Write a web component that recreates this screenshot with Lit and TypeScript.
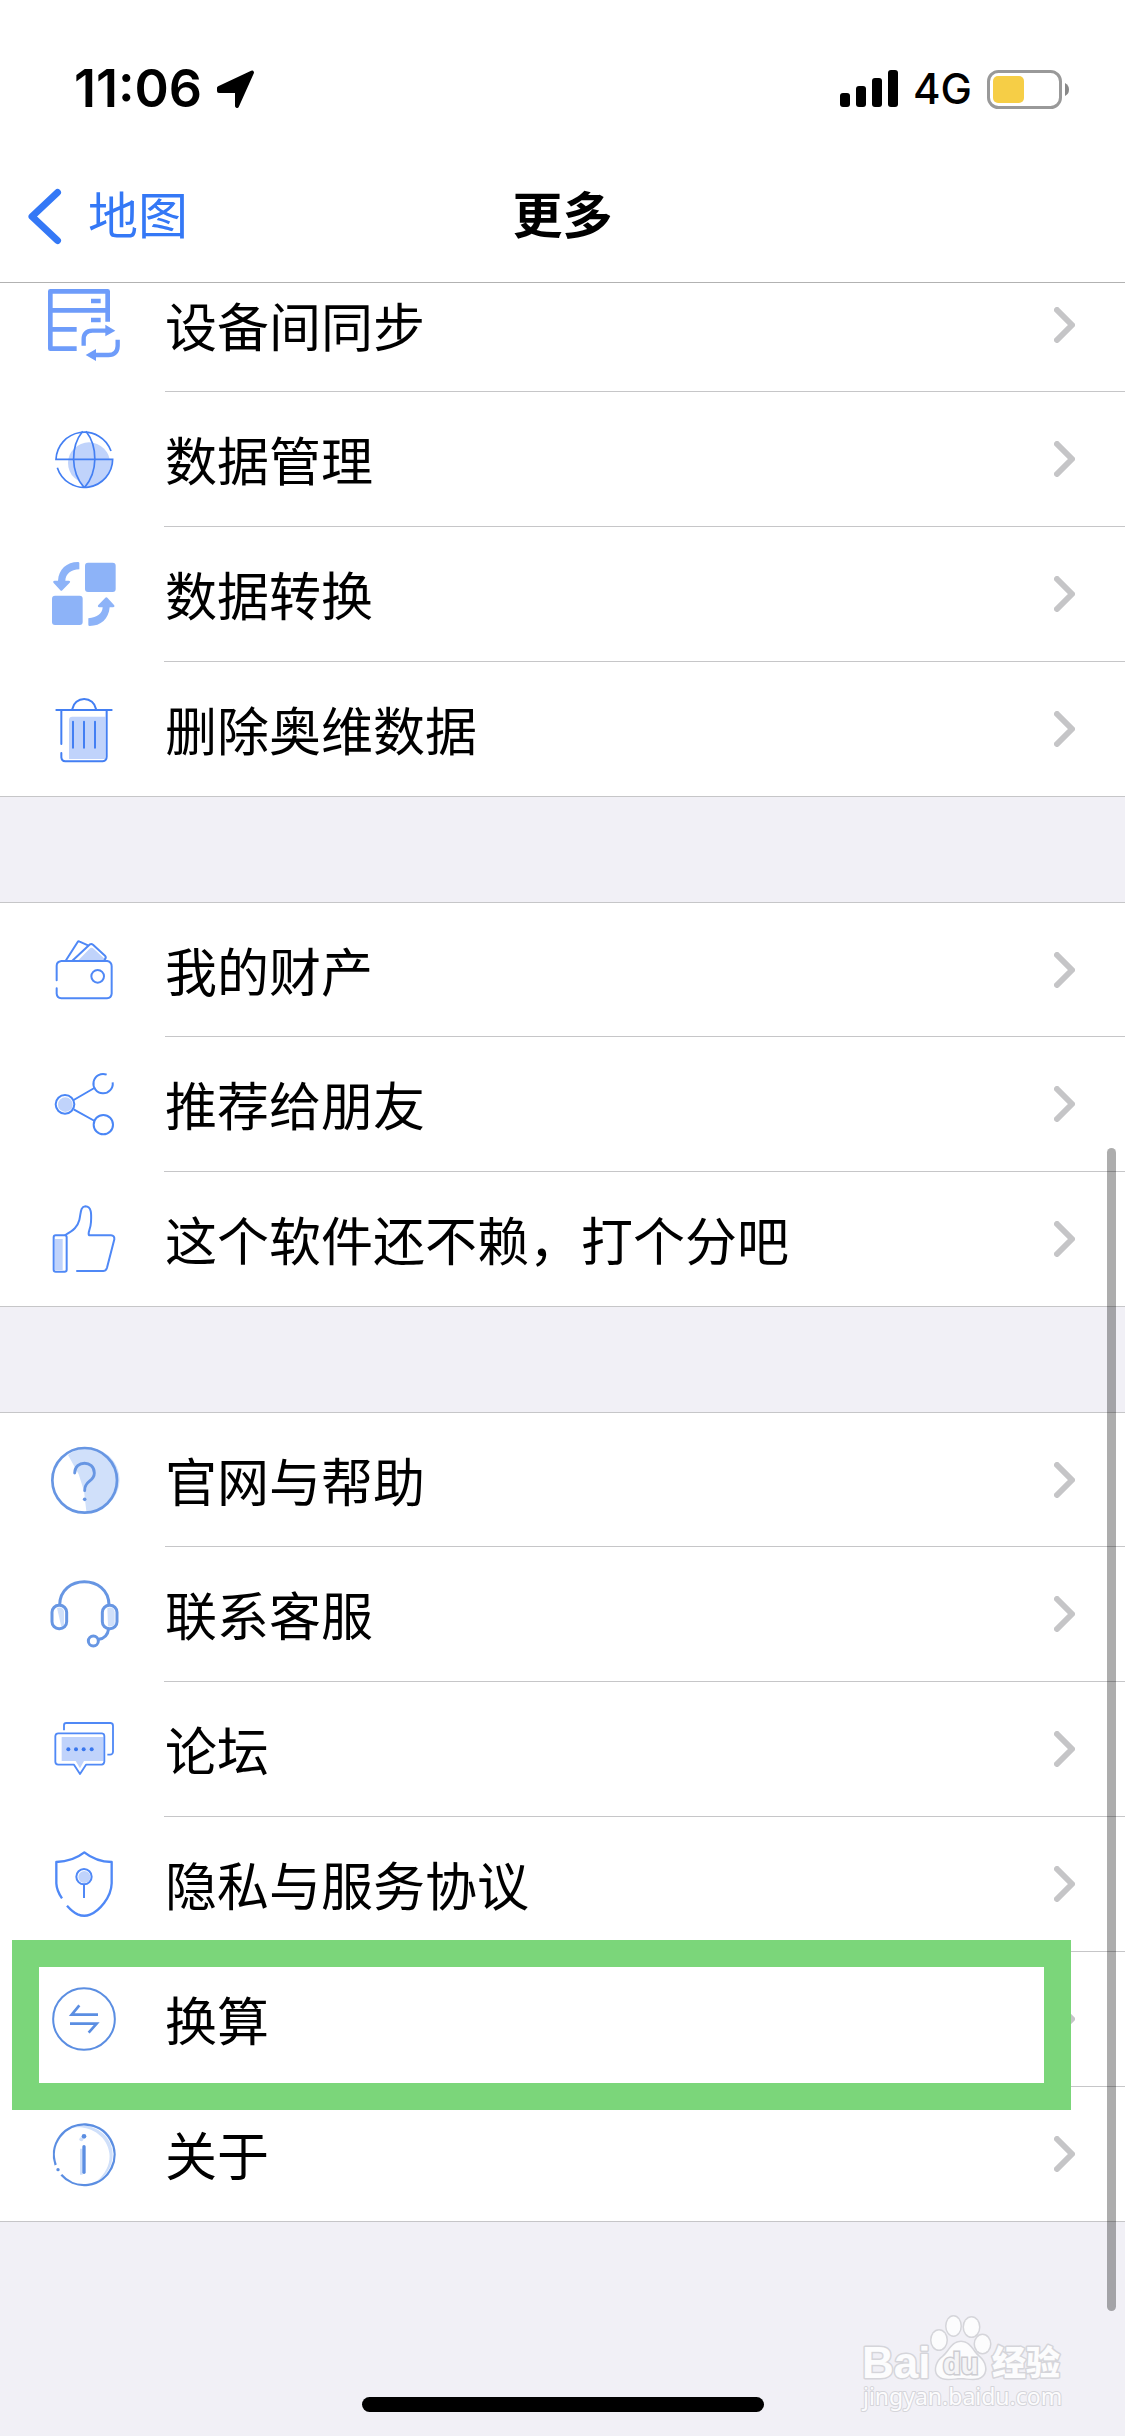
import { LitElement, html, svg, css, nothing, SVGTemplateResult } from "lit";
import { customElement, property } from "lit/decorators.js";

interface Item {
  icon: string;
  label: string;
  marked?: boolean;
}

const groups: Item[][] = [
  [
    { icon: "sync", label: "设备间同步" },
    { icon: "globe", label: "数据管理" },
    { icon: "convert", label: "数据转换" },
    { icon: "trash", label: "删除奥维数据" },
  ],
  [
    { icon: "wallet", label: "我的财产" },
    { icon: "share", label: "推荐给朋友" },
    { icon: "thumb", label: "这个软件还不赖，打个分吧" },
  ],
  [
    { icon: "help", label: "官网与帮助" },
    { icon: "headset", label: "联系客服" },
    { icon: "forum", label: "论坛" },
    { icon: "shield", label: "隐私与服务协议" },
    { icon: "exchange", label: "换算", marked: true },
    { icon: "info", label: "关于" },
  ],
];

/* Each drawing lives on a 216-unit square; the first entry is its viewBox. */
const icons: Record<string, [string, SVGTemplateResult]> = {
  sync: [
    "144 54 216 216",
    svg`<g fill="none" stroke="#6e9cfa" stroke-width="14">
      <path d="M230 233H151V61H323V152M151 118H323M151 175H230" stroke-linejoin="round"/>
      <path d="M273 90H302M273 147H302M251 224V205Q251 180 277 179H320M353 206V225Q352 252 325 252H284" stroke-width="13"/>
      </g><path fill="#6e9cfa" d="M316 161L346 179L316 196ZM288 234L257 252L288 270Z"/>`,
  ],
  globe: [
    "144 459 216 216",
    svg`<ellipse cx="267" cy="579" rx="63" ry="62" fill="#c0d3fb"/><path fill="#c0d3fb" d="M328 568H338A85 85 0 0 1 253 653L240 634Z"/>
      <g fill="none" stroke="#437ff3" stroke-width="5">
      <path d="M333 543A85 85 0 0 0 168 568H338A85 85 0 0 1 172 593"/>
      <path d="M248 484C211 530 211 606 252 652M258 484C294 530 294 606 254 652"/></g>`,
  ],
  convert: [
    "144 54 216 216",
    svg`<g fill="#8db3f8"><rect x="255" y="68" width="92" height="88" rx="9"/><rect x="156" y="167" width="92" height="88" rx="9"/>
      <path d="M238 69V88C212 89 197 102 196 122H206Q213 123 209 128L187 151Q184 154 181 151L161 129Q157 123 164 122H174C176 88 200 66 234 66Q238 66 238 69Z"/>
      <path d="M265 254V235C292 233 307 220 308 202H298Q291 200 295 195L316 173Q319 170 322 173L342 195Q346 200 339 202H329C326 237 303 258 269 258Q265 258 265 254Z"/></g>`,
  ],
  trash: [
    "144 459 216 216",
    svg`<path fill="#c0d3fb" d="M207 540Q207 530 217 530H316V657H207Z"/>
      <g fill="none" stroke="#437ff3" stroke-width="6" stroke-linecap="round" stroke-linejoin="round">
      <path d="M169 510H335M217 507A36 36 0 0 1 288 507M219 545V623M252 545V623M285 545V623"/>
      <path d="M184 512V612M184 639V652Q185 663 196 664H308Q320 662 320 650V512"/></g>`,
  ],
  wallet: [
    "144 99 216 216",
    svg`<path fill="#c0d3fb" d="M235 178L268 144Q274 137 281 143L312 172V178Z"/>
      <g fill="none" stroke="#4f88f6" stroke-width="6" stroke-linejoin="round" stroke-linecap="round">
      <path d="M170 238V194Q170 182 184 180H322Q335 183 335 196V278Q334 291 321 292H184Q171 291 170 278V262"/>
      <circle cx="293" cy="226" r="19"/><path d="M198 178L233 123Q235 120 239 122L264 133M217 179L270 130Q274 127 279 131L315 164Q320 169 314 176"/></g>`,
  ],
  share: [
    "144 504 216 216",
    svg`<circle cx="196" cy="614" r="22" fill="#c0d3fb"/><g fill="none" stroke="#4a86f6" stroke-width="6">
      <circle cx="195" cy="613" r="28"/><circle cx="310" cy="674" r="29"/><path d="M320 524A29 29 0 1 0 338 547M221 600L283 564M221 628L284 663"/></g>`,
  ],
  thumb: [
    "144 909 216 216",
    svg`<path fill="#c0d3fb" d="M165 1017H188V1110H165Z"/>
      <g fill="none" stroke="#4f88f6" stroke-width="6" stroke-linejoin="round" stroke-linecap="round">
      <rect x="161" y="1006" width="39" height="109" rx="6"/>
      <path d="M196 1005C221 991 233 980 238 960C243 938 241 920 256 919C276 920 274 944 273 966C272 988 262 998 267 1006H333Q344 1007 343 1018L321 1103Q318 1113 310 1113H231"/></g>`,
  ],
  help: [
    "144 129 216 216",
    svg`<path fill="#d0e0fa" d="M204 162L236 220L252 270L259 331A95 95 0 1 0 204 162Z"/>
      <g fill="none" stroke="#6796e3"><circle cx="254" cy="238" r="97" stroke-width="8"/>
      <path d="M224 216C224 177 283 177 283 216C283 244 254 236 254 269" stroke-width="8.500" stroke-linecap="round"/></g>
      <circle cx="254" cy="295" r="5.500" fill="#6796e3"/>`,
  ],
  headset: [
    "144 534 216 216",
    svg`<path fill="#d0e0fa" d="M171 624Q188 619 192 634V674L184 680ZM322 624Q341 618 344 635V672Q340 681 324 679Z"/>
      <g fill="none" stroke="#6796e3" stroke-width="9"><path d="M179 616C179 522 327 522 327 616M326 686Q322 715 296 718"/>
      <rect x="156" y="616" width="44" height="70" rx="21"/><rect x="307" y="616" width="44" height="70" rx="21"/><circle cx="280" cy="723" r="15"/></g>`,
  ],
  forum: [
    "144 129 216 216",
    svg`<path fill="#c0d3fb" d="M185 201H310V273H252L240 295L227 273H185Z"/>
      <g fill="none" stroke="#5089f6" stroke-width="5.500" stroke-linejoin="round">
      <path d="M192 181V166Q192 159 199 159H332Q339 160 339 167V246Q338 254 330 254H322"/>
      <path d="M175 190H306Q313 191 313 198V275Q312 283 305 284H258L240 312L222 284H175Q166 283 166 275V198Q167 190 175 190Z"/></g>
      <g fill="#3977ee"><circle cx="205" cy="238" r="6"/><circle cx="228" cy="238" r="6"/><circle cx="251" cy="238" r="6"/><circle cx="275" cy="238" r="6"/></g>`,
  ],
  shield: [
    "144 534 216 216",
    svg`<circle cx="253" cy="621" r="18" fill="#c0d3fb"/>
      <g fill="none" stroke="#4f88f6" stroke-width="7" stroke-linejoin="round">
      <path d="M186 685Q170 662 169 640V576Q219 574 253 547Q288 575 335 576V640C334 683 297 723 270 734Q252 741 233 733Q218 726 201 707"/>
      <circle cx="252" cy="620" r="23" stroke-width="6"/><path d="M252 642V684" stroke-width="6"/></g>`,
  ],
  exchange: [
    "144 189 216 216",
    svg`<g fill="none" stroke="#5b8ee2"><circle cx="252" cy="297" r="92.500" stroke-width="6"/>
      <path d="M294 284H215L238 256M210 311H290L266 338" stroke-width="8"/></g>`,
  ],
  info: [
    "144 594 216 216",
    svg`<path fill="#d0e0fa" d="M190 632C253 590 338 635 338 703C339 740 315 772 290 784C320 759 332 728 328 699C320 635 245 604 190 632ZM240 686H248V764H240Z"/>
      <circle cx="244" cy="658" r="6" fill="#d0e0fa"/>
      <g fill="none" stroke="#5b8ee2" stroke-width="7"><path d="M167 735A91 91 0 1 1 184 764"/>
      <path d="M252 680V757" stroke-width="10" stroke-linecap="round"/></g>
      <circle cx="252" cy="649" r="7" fill="#5b8ee2"/><circle cx="174" cy="749" r="5" fill="#5b8ee2"/>`,
  ],
};

@customElement("menu-row")
class MenuRow extends LitElement {
  @property() icon = "";
  @property() label = "";
  @property({ type: Boolean }) marked = false;

  static styles = css`
    :host {
      display: block;
      height: 100%;
    }
    .row {
      position: relative;
      display: flex;
      height: 100%;
      color: #000;
      text-decoration: none;
    }
    .lead {
      flex: none;
      display: flex;
      align-items: center;
      width: 165px;
      padding-left: 48px;
      box-sizing: border-box;
    }
    .icon {
      width: 72px;
      height: 72px;
    }
    .body {
      flex: 1;
      display: flex;
      align-items: center;
      justify-content: space-between;
      padding-right: 50px;
    }
    .label {
      padding-top: 8px;
      font-size: 52px;
      line-height: 76px;
    }
    .chevron {
      width: 21px;
      height: 36px;
    }
    .mark {
      position: absolute;
      z-index: 1;
      inset: -12px 54px -24px 12px;
      border: 27px solid #7bd67a;
      pointer-events: none;
    }
  `;

  render() {
    const [box, art] = icons[this.icon];
    return html`<a class="row" href="#">
      <span class="lead"><svg class="icon" viewBox=${box} aria-hidden="true">${art}</svg></span>
      <span class="body">
        <span class="label">${this.label}</span>
        <svg class="chevron" viewBox="0 0 21 36" aria-hidden="true">
          <path d="M3 3L18 18L3 33" fill="none" stroke="#c5c5c7" stroke-width="6" stroke-linecap="round" stroke-linejoin="round" />
        </svg>
      </span>
      ${this.marked ? html`<span class="mark"></span>` : nothing}
    </a>`;
  }
}

@customElement("app-root")
class AppRoot extends LitElement {
  static styles = css`
    :host {
      display: block;
      position: relative;
      min-height: 100vh;
      overflow: hidden;
      background: #f1f0f6;
      font-family: Inter, "Noto Sans CJK SC", sans-serif;
      color: #000;
    }
    .top {
      position: sticky;
      top: 0;
      z-index: 2;
      background: #fff;
      border-bottom: 1px solid #b2b2b2;
    }
    .status {
      display: flex;
      align-items: center;
      justify-content: space-between;
      height: 122px;
      padding: 28px 56px 0 74px;
    }
    .cluster {
      display: flex;
      align-items: center;
    }
    .time {
      font-size: 52px;
      font-weight: 600;
      line-height: 60px;
      margin-right: 14px;
    }
    .network {
      font-size: 42px;
      font-weight: 500;
      line-height: 60px;
      margin: 0 15px;
    }
    .arrow {
      width: 40px;
      height: 40px;
    }
    .signal {
      width: 58px;
      height: 38px;
    }
    .battery {
      width: 82px;
      height: 39px;
    }
    .nav {
      display: grid;
      grid-template-columns: 1fr auto 1fr;
      align-items: center;
      height: 132px;
      padding: 0 28px;
    }
    .back {
      justify-self: start;
      display: flex;
      align-items: center;
      gap: 26px;
      padding: 0;
      border: 0;
      background: none;
      font: inherit;
      font-size: 50px;
      line-height: 74px;
      color: #3478f6;
    }
    .back-icon {
      width: 34px;
      height: 57px;
    }
    .title {
      margin: 0;
      font-size: 50px;
      line-height: 74px;
      font-weight: 700;
    }
    .list {
      display: flex;
      flex-direction: column;
      gap: 105px;
      margin-top: -26px;
      padding-bottom: 214px;
    }
    .group {
      margin: 0;
      padding: 0;
      list-style: none;
      background: #fff;
    }
    .item {
      box-sizing: border-box;
      height: 135px;
      border-bottom: 1px solid;
      border-image: linear-gradient(to right, transparent 165px, #c6c6c8 165px) 1;
    }
    .item:first-child {
      border-top: 1px solid #c6c6c8;
      border-image: none;
      border-bottom: 0;
      background: linear-gradient(#c6c6c8, #c6c6c8) 165px 100% / 100% 1px no-repeat;
    }
    .item:last-child {
      border-image: none;
      border-color: #c6c6c8;
    }
    .scrollbar {
      position: absolute;
      z-index: 1;
      top: 1148px;
      bottom: 125px;
      right: 9px;
      width: 9px;
      border-radius: 5px;
      background: rgba(0, 0, 0, 0.32);
    }
    .home {
      position: absolute;
      bottom: 24px;
      left: 50%;
      width: 402px;
      height: 15px;
      margin-left: -201px;
      border-radius: 8px;
      background: #000;
    }
    .watermark {
      position: absolute;
      right: 55px;
      bottom: 20px;
      width: 210px;
      height: 104px;
    }
  `;

  render() {
    return html`
      <header class="top">
        <div class="status">
          <div class="cluster">
            <span class="time">11:06</span>
            <svg class="arrow" viewBox="216 69 40 40" aria-hidden="true">
              <path d="M219 88L252 72.500L237 106V91H219Z" stroke="#000" stroke-width="4" stroke-linejoin="round" />
            </svg>
          </div>
          <div class="cluster">
            <svg class="signal" viewBox="0 0 58 38" aria-hidden="true">
              <rect y="23" width="10" height="14" rx="3" /><rect x="16" y="16" width="10" height="21" rx="3" />
              <rect x="32" y="8" width="10" height="29" rx="3" /><rect x="48" width="10" height="37" rx="3" />
            </svg>
            <span class="network">4G</span>
            <svg class="battery" viewBox="0 0 82 39" aria-hidden="true">
              <rect x="1.500" y="1.500" width="72" height="36" rx="10" fill="none" stroke="#999" stroke-width="3" />
              <rect x="6" y="6" width="31" height="27" rx="5" fill="#f6ce46" />
              <path d="M78 13Q82 15 82 19.500T78 26Z" fill="#888" />
            </svg>
          </div>
        </div>
        <nav class="nav">
          <button class="back">
            <svg class="back-icon" viewBox="28 187 34 57" aria-hidden="true">
              <path d="M57.500 191.500L32 215.500L57.500 239.500" fill="none" stroke="#3478f6" stroke-width="7" stroke-linecap="round" stroke-linejoin="round" />
            </svg>地图
          </button>
          <h1 class="title">更多</h1>
        </nav>
      </header>
      <main class="list">
        ${groups.map(
          (items) => html`<ul class="group">
            ${items.map(
              (item) => html`<li class="item">
                <menu-row .icon=${item.icon} .label=${item.label} .marked=${!!item.marked}></menu-row>
              </li>`
            )}
          </ul>`
        )}
      </main>
      <div class="scrollbar"></div>
      <svg class="watermark" viewBox="860 2312 210 104">
        <g fill="#fcfcfd" stroke="#d5d5da" stroke-width="3" paint-order="stroke" stroke-linejoin="round">
          <text x="862" y="2378" font-family="Liberation Sans, sans-serif" font-weight="700" font-size="44">Bai</text>
          <ellipse cx="939" cy="2340" rx="7.500" ry="9.500" /><ellipse cx="953.500" cy="2326" rx="7" ry="9.500" />
          <ellipse cx="971.500" cy="2327" rx="7.500" ry="9.500" /><ellipse cx="982.500" cy="2344" rx="7.500" ry="9" />
          <path d="M961 2342C970 2342 972 2351 979 2357C985 2362 987 2370 983 2375C978 2381 968 2378 961 2378C953 2378 943 2381 938 2375C934 2370 937 2361 943 2357C950 2351 952 2342 961 2342Z" />
          <text x="992" y="2375" font-family="Noto Sans CJK SC, sans-serif" font-weight="900" font-size="34">经验</text>
          <text x="863" y="2405" font-family="Noto Sans, sans-serif" font-size="23" stroke-width="2">jingyan.baidu.com</text>
        </g>
        <text x="943" y="2374" font-family="Liberation Sans, sans-serif" font-weight="700" font-size="29" fill="#f4f4f6" stroke="#cdcdd2" stroke-width="3" paint-order="stroke">du</text>
      </svg>
      <div class="home"></div>
    `;
  }
}
